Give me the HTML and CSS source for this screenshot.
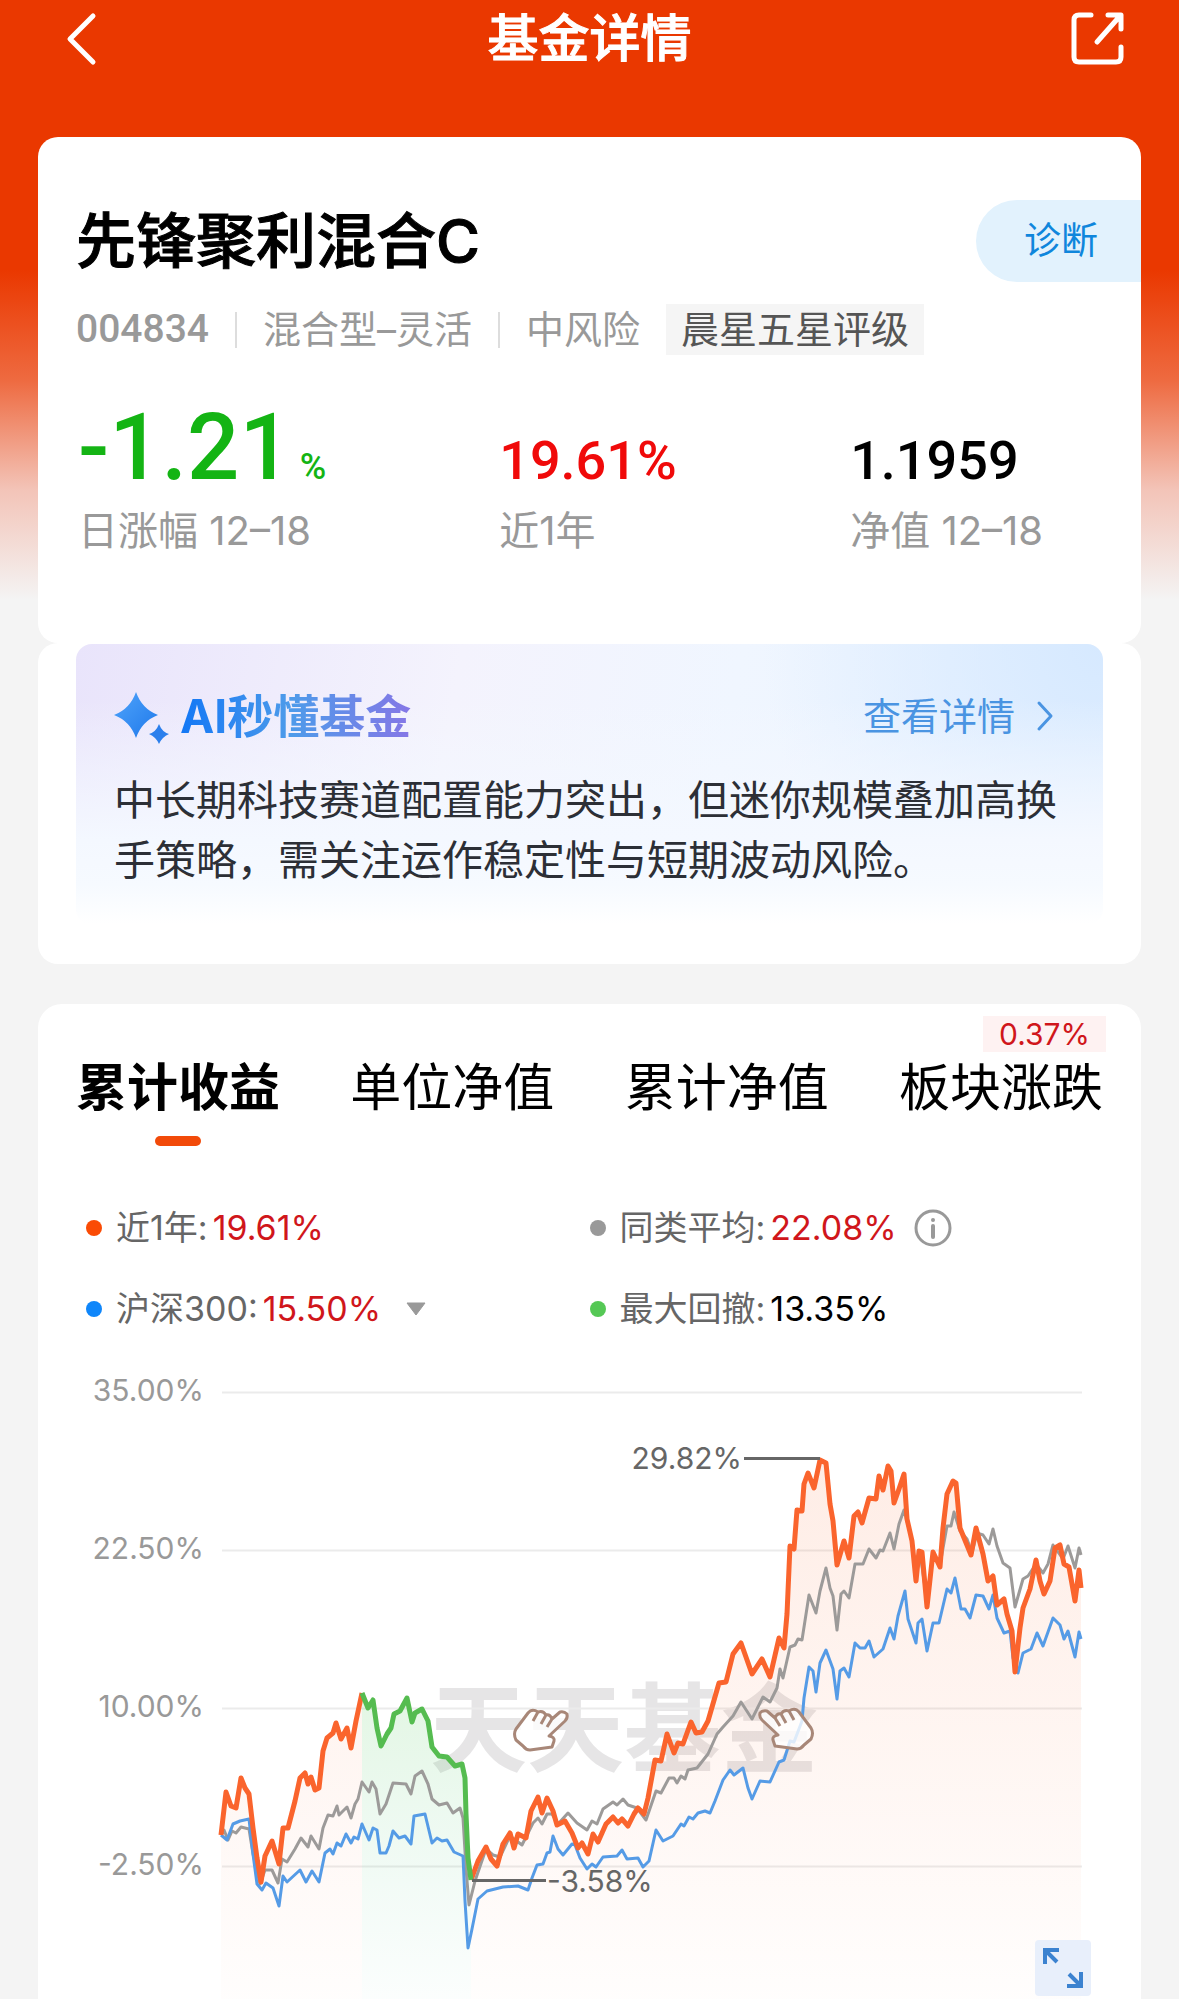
FILE: index.html
```html
<!DOCTYPE html>
<html lang="zh-CN">
<head>
    <meta charset="UTF-8">
    <meta name="viewport" content="width=device-width, initial-scale=1.0">
    <title>基金详情</title>
    <link rel="stylesheet" href="styles.css">
</head>
<body>
    <header class="topbar">
        <button type="button" class="icon-btn" aria-label="返回">
            <svg width="56" height="56" viewBox="0 0 56 56"><path d="M40 5L17 28L40 51" fill="none" stroke="#fff" stroke-width="5" stroke-linecap="round" stroke-linejoin="round"/></svg>
        </button>
        <h1>基金详情</h1>
        <button type="button" class="icon-btn" aria-label="分享">
            <svg width="56" height="56" viewBox="0 0 56 56"><path d="M21 4H9Q4 4 4 9V46Q4 51 9 51H46Q51 51 51 46V36M38 4H51V18M50 5L27 31" fill="none" stroke="#fff" stroke-width="5" stroke-linecap="round" stroke-linejoin="round"/></svg>
        </button>
    </header>

    <main>
        <section class="card fund">
            <div class="fund-head">
                <h2>先锋聚利混合C</h2>
                <a class="diagnose" href="#">诊断</a>
            </div>
            <div class="meta">
                <span class="code">004834</span>
                <span class="sep"></span>
                <span>混合型–灵活</span>
                <span class="sep"></span>
                <span>中风险</span>
                <span class="tag">晨星五星评级</span>
            </div>
            <div class="stats">
                <strong class="num big">-1.21<small>%</small></strong>
                <span>日涨幅 12–18</span>
                <strong class="num red">19.61%</strong>
                <span>近1年</span>
                <strong class="num">1.1959</strong>
                <span>净值 12–18</span>
            </div>
        </section>

        <section class="card ai-card">
            <div class="ai">
                <div class="ai-head">
                    <svg width="58" height="56" viewBox="0 0 58 56">
                        <defs>
                            <linearGradient id="star" x1="0" y1="0" x2="1" y2="1"><stop offset="0" stop-color="#4fa4fb"/><stop offset="1" stop-color="#1f78ea"/></linearGradient>
                        </defs>
                        <path d="M22 4Q28 21 44 27Q28 33 22 50Q16 33 0 27Q16 21 22 4Z" fill="url(#star)"/>
                        <path d="M45 36Q48 44 55 46Q48 49 45 56Q42 49 35 46Q42 44 45 36Z" fill="#2b7fec"/>
                    </svg>
                    <h3>AI秒懂基金</h3>
                    <a href="#">查看详情
                        <svg width="20" height="36" viewBox="0 0 20 36"><path d="M4 5L16 18L4 31" fill="none" stroke="#4a94e2" stroke-width="3" stroke-linecap="round" stroke-linejoin="round"/></svg>
                    </a>
                </div>
                <p>中长期科技赛道配置能力突出，但迷你规模叠加高换手策略，需关注运作稳定性与短期波动风险。</p>
            </div>
        </section>

        <section class="card trend">
            <nav class="tabs">
                <button type="button" class="active">累计收益</button>
                <button type="button">单位净值</button>
                <button type="button">累计净值</button>
                <button type="button">板块涨跌<span class="badge">0.37%</span></button>
            </nav>
            <div class="legend">
                <div><i class="dot orange"></i>近1年:<b class="red">19.61%</b></div>
                <div><i class="dot gray"></i>同类平均:<b class="red">22.08%</b>
                    <button type="button" class="icon-btn" aria-label="说明">
                        <svg width="40" height="40" viewBox="0 0 40 40"><circle cx="20" cy="20" r="17" fill="none" stroke="#999" stroke-width="3"/><circle cx="20" cy="12" r="2" fill="#999"/><path d="M20 18V29" stroke="#999" stroke-width="4" stroke-linecap="round"/></svg>
                    </button>
                </div>
                <div><i class="dot blue"></i>沪深300:<b class="red">15.50%</b>
                    <button type="button" class="icon-btn caret" aria-label="切换指数">
                        <svg width="22" height="14" viewBox="0 0 22 14"><path d="M2 1H20L11 13Z" fill="#999" stroke="#999" stroke-linejoin="round"/></svg>
                    </button>
                </div>
                <div><i class="dot green"></i>最大回撤:<b>13.35%</b></div>
            </div>

            <div class="chart">
                <svg viewBox="38 1350 1103 649" role="img" aria-label="累计收益走势">
                    <defs>
                        <linearGradient id="fillOrange" gradientUnits="userSpaceOnUse" x1="0" y1="1450" x2="0" y2="1999"><stop offset="0" stop-color="#fa6428" stop-opacity=".12"/><stop offset="1" stop-color="#fa6428" stop-opacity=".01"/></linearGradient>
                        <linearGradient id="fillGreen" gradientUnits="userSpaceOnUse" x1="0" y1="1690" x2="0" y2="1999"><stop offset="0" stop-color="#50c850" stop-opacity=".16"/><stop offset="1" stop-color="#50c8a0" stop-opacity=".02"/></linearGradient>
                    </defs>
                    <text class="watermark" x="430" y="1763">天天基金</text>
                    <g class="grid">
                        <path d="M222 1391.5H1082M222 1549.5H1082M222 1707.5H1082M222 1865.5H1082"/>
                    </g>
                    <g class="axis">
                        <text x="204" y="1400">35.00%</text>
                        <text x="204" y="1558">22.50%</text>
                        <text x="204" y="1716">10.00%</text>
                        <text x="204" y="1874">-2.50%</text>
                    </g>
                    <g id="series"></g>
                    <g class="mark">
                        <path d="M744 1457.5H820M472 1879.5H546"/>
                        <text x="742" y="1468" text-anchor="end">29.82%</text>
                        <text x="547" y="1891">-3.58%</text>
                    </g>
                    <g class="hand">
                        <path id="hand" d="M516 1728L528 1712Q532 1707 538 1711Q543 1709 546 1714Q550 1713 552 1718L560 1711Q564 1710 567 1713Q568 1717 565 1720L549 1735Q555 1736 554 1740L552 1746L530 1749Q526 1749 523 1745L516 1739Q513 1733 516 1728ZM538 1711L533 1720M546 1714L541 1723M552 1718L547 1726"/>
                        <use href="#hand" transform="matrix(-1 0 0 1 1327 -1)"/>
                    </g>
                </svg>
                <button type="button" class="expand" aria-label="全屏">
                    <svg width="56" height="56" viewBox="0 0 56 56"><path d="M10 24V10H24M11 11L22 22M46 32V46H32M45 45L34 34" fill="none" stroke="#3b82d0" stroke-width="4"/></svg>
                </button>
            </div>
        </section>
    </main>

    <script>
        const fund1 = "221,1834 226,1791 231,1805 236,1807 241,1777 245,1787 249,1793 253,1827 257,1857 261,1881 265,1855 272,1840 279,1863 283,1827 288,1827 295,1800 300,1777 305,1772 308,1783 311,1776 315,1789 319,1787 323,1750 327,1737 333,1732 336,1722 341,1738 347,1727 351,1747 356,1720 362,1692";
        const drawdown = "362,1692 368,1707 373,1699 377,1727 381,1745 387,1733 391,1727 394,1713 400,1710 407,1697 412,1721 415,1712 422,1708 428,1720 432,1746 439,1755 447,1756 455,1765 462,1763 465,1777 466,1813 468,1857 471,1879";
        const fund2 = "471,1879 478,1860 486,1846 491,1858 497,1865 503,1843 510,1832 514,1847 518,1833 526,1837 531,1810 538,1796 542,1812 547,1797 553,1810 557,1824 565,1820 572,1832 578,1847 582,1842 588,1853 593,1833 598,1841 606,1823 613,1816 618,1822 622,1818 628,1825 634,1813 638,1807 644,1813 648,1797 655,1759 661,1760 667,1733 674,1752 678,1742 683,1743 691,1721 696,1732 702,1731 708,1720 719,1682 726,1681 733,1653 741,1642 752,1673 762,1658 770,1676 779,1637 784,1647 787,1613 790,1545 794,1548 797,1509 802,1510 804,1483 808,1472 814,1487 820,1459 826,1462 830,1503 833,1520 837,1564 844,1540 849,1557 854,1515 858,1511 862,1522 869,1497 876,1498 879,1475 883,1489 888,1465 891,1470 894,1502 899,1488 904,1473 907,1518 912,1540 916,1580 919,1550 922,1551 927,1606 933,1551 940,1566 943,1527 947,1493 953,1480 956,1482 960,1527 971,1554 976,1527 983,1553 988,1580 993,1575 997,1604 1004,1598 1007,1613 1012,1630 1015,1671 1020,1627 1023,1607 1030,1588 1036,1559 1040,1580 1044,1593 1050,1580 1055,1547 1060,1544 1064,1563 1069,1566 1075,1600 1079,1569 1081,1587";
        const average = "221,1834 224,1829 228,1839 232,1830 236,1832 241,1826 249,1828 253,1853 260,1883 265,1869 272,1869 278,1882 282,1858 287,1861 295,1848 301,1837 308,1846 311,1835 319,1848 323,1827 328,1814 333,1815 337,1805 339,1814 347,1806 351,1817 355,1803 358,1798 362,1781 369,1791 372,1781 376,1788 380,1813 386,1803 393,1782 406,1783 411,1793 415,1775 422,1770 428,1783 432,1798 439,1804 447,1802 453,1812 460,1807 463,1817 466,1867 469,1904 475,1880 486,1848 493,1854 500,1856 510,1835 522,1844 533,1822 538,1817 542,1823 547,1813 552,1813 558,1823 568,1812 577,1822 587,1829 592,1820 597,1823 603,1808 613,1801 617,1804 623,1798 628,1804 637,1807 646,1819 656,1790 661,1792 669,1777 674,1777 677,1782 681,1775 685,1778 688,1769 697,1767 708,1753 717,1733 723,1726 733,1715 741,1701 752,1718 763,1696 770,1701 777,1687 780,1668 783,1677 790,1646 795,1644 798,1638 802,1639 809,1594 816,1612 820,1590 826,1567 830,1587 833,1595 837,1629 841,1593 844,1590 849,1597 855,1563 863,1563 869,1548 876,1557 880,1549 883,1550 890,1532 894,1548 899,1523 904,1509 907,1520 912,1540 916,1575 920,1552 927,1600 933,1553 940,1564 947,1525 951,1525 954,1511 960,1530 967,1538 972,1552 977,1532 983,1534 989,1543 993,1528 997,1545 1003,1562 1010,1567 1015,1606 1023,1578 1028,1575 1036,1563 1043,1572 1048,1563 1053,1544 1063,1558 1068,1545 1075,1567 1079,1547 1081,1554";
        const index300 = "221,1834 227,1839 233,1823 240,1820 249,1818 253,1853 257,1883 262,1889 266,1882 273,1887 279,1905 283,1875 287,1881 300,1869 306,1881 312,1870 319,1881 325,1852 330,1848 333,1853 337,1842 341,1845 346,1833 351,1842 354,1836 358,1838 362,1823 369,1839 373,1827 377,1829 380,1852 386,1852 389,1845 393,1830 399,1837 405,1835 411,1843 414,1815 425,1813 432,1842 437,1837 442,1840 447,1839 454,1851 463,1855 465,1900 468,1947 472,1928 478,1898 487,1890 503,1886 518,1885 528,1889 532,1877 537,1864 543,1863 547,1852 550,1851 553,1835 558,1848 563,1854 572,1843 575,1844 580,1857 587,1868 592,1863 596,1866 603,1856 617,1855 622,1849 627,1858 638,1857 643,1866 649,1860 656,1829 663,1840 673,1835 681,1823 684,1825 689,1816 693,1818 698,1812 705,1810 710,1812 715,1800 723,1779 730,1769 734,1774 743,1767 748,1787 752,1798 760,1780 770,1781 779,1761 784,1759 790,1740 794,1741 802,1720 804,1697 809,1666 813,1670 816,1691 820,1662 826,1649 833,1668 837,1698 840,1670 844,1667 849,1676 855,1642 860,1647 865,1647 869,1640 874,1656 883,1648 890,1627 894,1638 898,1615 905,1590 908,1618 916,1642 918,1622 922,1618 927,1650 933,1622 939,1622 947,1588 951,1592 955,1577 961,1608 965,1608 970,1617 976,1594 983,1595 989,1608 993,1594 997,1617 1004,1632 1010,1630 1013,1657 1018,1672 1023,1652 1031,1648 1037,1632 1043,1645 1053,1617 1060,1624 1064,1638 1068,1630 1075,1656 1079,1631 1081,1638";

        const series = document.getElementById("series");
        function add(tag, points, cls) {
            const el = document.createElementNS("http://www.w3.org/2000/svg", tag);
            el.setAttribute("points", points);
            el.setAttribute("class", cls);
            series.appendChild(el);
        }
        // close the line down to the bottom of the plot
        function area(points, cls) {
            const list = points.split(" ");
            const x1 = list[0].split(",")[0];
            const x2 = list[list.length - 1].split(",")[0];
            add("polygon", points + " " + x2 + ",1999 " + x1 + ",1999", cls);
        }
        area(fund1, "area-orange");
        area(drawdown, "area-green");
        area(fund2, "area-orange");
        add("polyline", average, "line line-gray");
        add("polyline", index300, "line line-blue");
        add("polyline", fund1, "line line-orange");
        add("polyline", fund2, "line line-orange");
        add("polyline", drawdown, "line line-green");
    </script>
</body>
</html>
```

FILE: styles.css
```css
*{
    margin: 0;
    padding: 0;
    box-sizing: border-box;
}
body{
    font-family: Inter, "Noto Sans CJK SC", sans-serif;
    color: #000;
    background: #f4f4f4 linear-gradient(#ea3800 270px, #ee6a40 380px, #f3c4b8 490px, #f4f4f4 600px) no-repeat;
}
button{
    font: inherit;
    color: inherit;
    background: none;
    border: none;
}
a{
    text-decoration: none;
}
svg{
    display: block;
}
.red{
    color: #d0161b;
}
.topbar{
    display: flex;
    align-items: center;
    justify-content: space-between;
    height: 137px;
    padding: 0 53px 60px;
    color: #fff;
}
.topbar h1{
    font-size: 51px;
    font-weight: 500;
    line-height: 76px;
    -webkit-text-stroke: 1px;
}
.card{
    margin: 0 38px;
    background: #fff;
    border-radius: 20px;
}

/* fund summary */
.fund{
    padding: 63px 0 82px 38px;
}
.fund-head{
    display: flex;
    align-items: center;
    justify-content: space-between;
}
.fund-head h2{
    font-size: 60px;
    font-weight: 500;
    line-height: 82px;
    -webkit-text-stroke: 1px;
}
.diagnose{
    padding: 0 43px 0 48px;
    font-size: 37px;
    line-height: 82px;
    color: #0f86dc;
    background: #e2f2fd;
    border-radius: 41px 0 0 41px;
}
.meta{
    display: flex;
    align-items: center;
    gap: 26px;
    margin-top: 22px;
    font-size: 38px;
    line-height: 51px;
    color: #999;
}
.code, .num{
    font-family: Roboto, sans-serif;
    font-weight: 500;
}
.code{
    font-size: 39px;
}
.sep{
    width: 2px;
    height: 36px;
    background: #ddd;
}
.tag{
    padding: 0 15px;
    color: #555;
    background: #f5f5f5;
}
.stats{
    display: grid;
    grid-template-columns: minmax(0, 42fr) minmax(0, 35fr) minmax(0, 29fr);
    grid-template-rows: auto auto;
    grid-auto-flow: column;
    align-items: baseline;
    margin-top: 53px;
    padding-left: 2px;
    font-size: 40px;
    line-height: 60px;
    color: #999;
}
.num{
    font-size: 54px;
    line-height: 80px;
    color: #000;
}
.num.big{
    font-size: 92px;
    color: #14b414;
}
.num small{
    margin-left: 8px;
    font-size: 36px;
    line-height: 36px;
}
.num.red{
    color: #f00a0a;
}

/* AI summary */
.ai-card{
    padding: 1px 38px 40px;
}
.ai{
    padding: 42px 38px 34px;
    border-radius: 16px;
    background:
        linear-gradient(rgba(244,248,255,0) 20%, #f4f8ff 70%, #f6faff 86%, #fff),
        radial-gradient(circle at 100% 0, #d6e9ff, rgba(214,233,255,0) 32%),
        linear-gradient(100deg, #e9e4fb, #f4f3fd 36%, #f0f6ff 62%, #e8f2ff);
}
.ai-head{
    display: flex;
    align-items: center;
    gap: 8px;
    line-height: 60px;
}
.ai-head h3{
    flex: 1;
    font-size: 46px;
    color: transparent;
    background: linear-gradient(90deg, #1377f5, #4d9bea 110px, #8577e6 230px);
    background-clip: text;
    -webkit-background-clip: text;
}
.ai-head a{
    display: flex;
    align-items: center;
    gap: 20px;
    margin-right: 10px;
    font-size: 38px;
    color: #4a94e2;
}
.ai p{
    margin-top: 24px;
    font-size: 41px;
    line-height: 60px;
    color: #2c2f36;
}

/* trend */
.trend{
    margin-top: 40px;
    border-radius: 24px 24px 0 0;
}
.tabs{
    display: flex;
    justify-content: space-between;
    padding: 48px 38px 0;
}
.tabs button{
    position: relative;
    padding-bottom: 22px;
    font-size: 51px;
    line-height: 72px;
}
.tabs .active{
    font-weight: 700;
}
.tabs .active::after{
    content: "";
    position: absolute;
    left: 50%;
    bottom: 0;
    width: 46px;
    height: 10px;
    margin-left: -23px;
    border-radius: 5px;
    background: #f24a09;
}
.badge{
    position: absolute;
    right: -3px;
    top: -36px;
    padding: 0 16px;
    font-size: 30px;
    line-height: 36px;
    color: #d0161b;
    background: #fef2f2;
}
.legend{
    display: grid;
    grid-template-columns: 1fr 1fr;
    row-gap: 21px;
    padding: 52px 48px 0;
    font-size: 34px;
    line-height: 60px;
    color: #666;
}
.legend div{
    display: flex;
    align-items: center;
}
.legend b{
    margin-left: 5px;
    font-weight: 400;
    color: #000;
}
.legend .red{
    color: #d0161b;
}
.legend .icon-btn{
    margin-left: 16px;
}
.legend .caret{
    margin-left: 24px;
}
.dot{
    width: 16px;
    height: 16px;
    margin-right: 14px;
    border-radius: 50%;
}
.orange{
    background: #fa4b05;
}
.gray{
    background: #999;
}
.blue{
    background: #0f86fa;
}
.green{
    background: #55c855;
}

.chart{
    position: relative;
    margin-top: 12px;
}
.chart text{
    font-size: 30px;
}
.axis{
    fill: #999;
    text-anchor: end;
}
.mark{
    fill: #666;
    stroke-width: 3;
}
.mark path{
    stroke: #666;
}
.chart .watermark{
    font-size: 97px;
    font-weight: 700;
    fill: #e6e5e6;
}
.grid{
    stroke: #ebebeb;
    stroke-width: 2;
}
.line{
    fill: none;
    stroke-width: 3;
    stroke-linejoin: round;
}
.line-gray{
    stroke: #9c9a99;
}
.line-blue{
    stroke: #559be6;
}
.line-orange{
    stroke: #fa642d;
    stroke-width: 5;
}
.line-green{
    stroke: #55bc50;
    stroke-width: 5;
}
.area-orange{
    fill: url(#fillOrange);
}
.area-green{
    fill: url(#fillGreen);
}
.hand{
    fill: #fff;
    fill-opacity: .8;
    stroke: #a88778;
    stroke-width: 3;
    stroke-linejoin: round;
}
.expand{
    position: absolute;
    right: 50px;
    bottom: 4px;
    border-radius: 4px;
    background: #e8effb;
}
```
